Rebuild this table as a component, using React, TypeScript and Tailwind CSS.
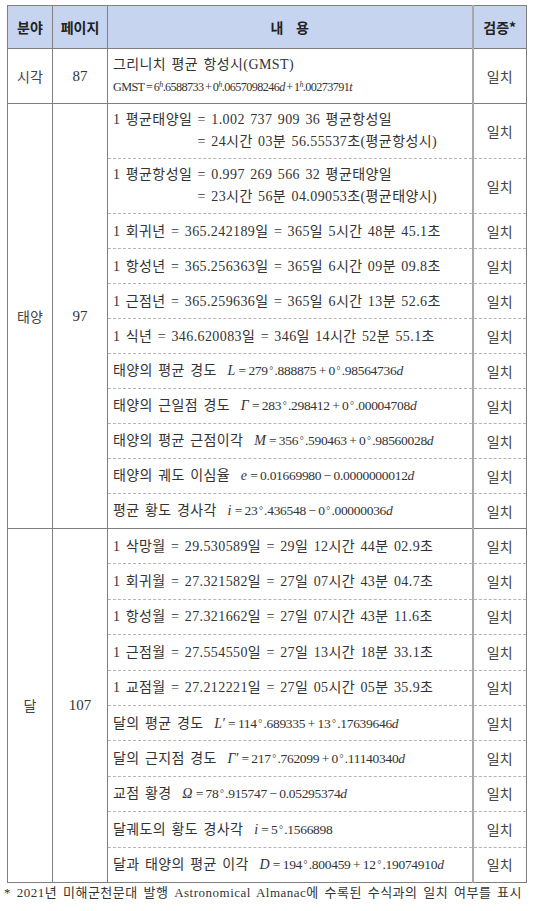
import React from 'react';

const kr = "font-['Liberation_Serif','Noto_Sans_CJK_KR',serif]";
const sans = "font-['Noto_Sans_CJK_KR',sans-serif]";
const math = "font-['Liberation_Serif',serif] text-[13.5px] tracking-[-0.3px] [word-spacing:0px]";

const solid = 'border-[#7f7f7f]';
const dash = '[border-top-style:dashed] border-t-[#b5b5b5]';

// 수식: 변수 + 값
function V({ children }: { children: React.ReactNode }) {
  return <i className="mr-[1px] text-[14px]">{children}</i>;
}
function Op({ children }: { children: React.ReactNode }) {
  return <span className="mx-[2.5px]">{children}</span>;
}
function Deg() {
  return <span className="mx-[1.5px] text-[10px] relative -top-[1px]">°</span>;
}

type Row = { content: React.ReactNode; double?: boolean };

function TwoLine({ a, b, c }: { a: string; b: string; c: string }) {
  return (
    <div className="grid grid-cols-[auto_1fr] leading-[22px]">
      <span>{a}&nbsp;</span>
      <span>{b}</span>
      <span />
      <span>{c}</span>
    </div>
  );
}

function Formula({ label, children }: { label: string; children: React.ReactNode }) {
  return (
    <span className="flex items-baseline">
      <span>{label}&nbsp;&nbsp;</span>
      <span className={math}>{children}</span>
    </span>
  );
}

const sunRows: Row[] = [
  { double: true, content: <TwoLine a="1 평균태양일" b="= 1.002 737 909 36 평균항성일" c="= 24시간 03분 56.55537초(평균항성시)" /> },
  { double: true, content: <TwoLine a="1 평균항성일" b="= 0.997 269 566 32 평균태양일" c="= 23시간 56분 04.09053초(평균태양시)" /> },
  { content: '1 회귀년 = 365.242189일 = 365일 5시간 48분 45.1초' },
  { content: '1 항성년 = 365.256363일 = 365일 6시간 09분 09.8초' },
  { content: '1 근점년 = 365.259636일 = 365일 6시간 13분 52.6초' },
  { content: '1 식년 = 346.620083일 = 346일 14시간 52분 55.1초' },
  {
    content: (
      <Formula label="태양의 평균 경도">
        <V>L</V><Op>=</Op>279<Deg />.888875<Op>+</Op>0<Deg />.98564736<i>d</i>
      </Formula>
    ),
  },
  {
    content: (
      <Formula label="태양의 근일점 경도">
        <V>Γ</V><Op>=</Op>283<Deg />.298412<Op>+</Op>0<Deg />.00004708<i>d</i>
      </Formula>
    ),
  },
  {
    content: (
      <Formula label="태양의 평균 근점이각">
        <V>M</V><Op>=</Op>356<Deg />.590463<Op>+</Op>0<Deg />.98560028<i>d</i>
      </Formula>
    ),
  },
  {
    content: (
      <Formula label="태양의 궤도 이심율">
        <V>e</V><Op>=</Op>0.01669980<Op>−</Op>0.0000000012<i>d</i>
      </Formula>
    ),
  },
  {
    content: (
      <Formula label="평균 황도 경사각">
        <V>i</V><Op>=</Op>23<Deg />.436548<Op>−</Op>0<Deg />.00000036<i>d</i>
      </Formula>
    ),
  },
];

const moonRows: Row[] = [
  { content: '1 삭망월 = 29.530589일 = 29일 12시간 44분 02.9초' },
  { content: '1 회귀월 = 27.321582일 = 27일 07시간 43분 04.7초' },
  { content: '1 항성월 = 27.321662일 = 27일 07시간 43분 11.6초' },
  { content: '1 근점월 = 27.554550일 = 27일 13시간 18분 33.1초' },
  { content: '1 교점월 = 27.212221일 = 27일 05시간 05분 35.9초' },
  {
    content: (
      <Formula label="달의 평균 경도">
        <V>L′</V><Op>=</Op>114<Deg />.689335<Op>+</Op>13<Deg />.17639646<i>d</i>
      </Formula>
    ),
  },
  {
    content: (
      <Formula label="달의 근지점 경도">
        <V>Γ′</V><Op>=</Op>217<Deg />.762099<Op>+</Op>0<Deg />.11140340<i>d</i>
      </Formula>
    ),
  },
  {
    content: (
      <Formula label="교점 황경">
        <V>Ω</V><Op>=</Op>78<Deg />.915747<Op>−</Op>0.05295374<i>d</i>
      </Formula>
    ),
  },
  {
    content: (
      <Formula label="달궤도의 황도 경사각">
        <V>i</V><Op>=</Op>5<Deg />.1566898
      </Formula>
    ),
  },
  {
    content: (
      <Formula label="달과 태양의 평균 이각">
        <V>D</V><Op>=</Op>194<Deg />.800459<Op>+</Op>12<Deg />.19074910<i>d</i>
      </Formula>
    ),
  },
];

function Group({ field, page, rows, height, last }: { field: string; page: string; rows: Row[]; height: string; last?: boolean }) {
  return (
    <>
      {rows.map((r, i) => (
        <tr key={i} className={r.double ? 'h-[55px]' : height}>
          {i === 0 && (
            <>
              <td rowSpan={rows.length} className={`border ${solid} text-center text-[#444] ${sans} text-[14px]`}>
                {field}
              </td>
              <td rowSpan={rows.length} className={`border ${solid} text-center text-[#333] font-['Liberation_Serif',serif] text-[15px]`}>
                {page}
              </td>
            </>
          )}
          <td
            className={`border-t border-l ${i === 0 ? solid : `${solid} ${dash}`} ${
              last && i === rows.length - 1 ? `border-b ${solid}` : ''
            } pl-[5px] text-[14px] text-[#333] whitespace-nowrap tracking-[0.4px] [word-spacing:1.5px]`}
          >
            {r.content}
          </td>
          <td
            className={`border-t border-l-2 border-r ${i === 0 ? solid : `${solid} ${dash}`} border-l-[#a8a8a8] ${
              last && i === rows.length - 1 ? `border-b ${solid}` : ''
            } text-center text-[14px] text-[#444] ${sans}`}
          >
            일치
          </td>
        </tr>
      ))}
    </>
  );
}

export default function App() {
  return (
    <div className={`min-h-[911px] bg-white pt-[5px] ${kr}`}>
      <table className="ml-[7px] w-[519px] table-fixed border-collapse">
        <colgroup>
          <col className="w-[45px]" />
          <col className="w-[55px]" />
          <col className="w-[365px]" />
          <col className="w-[54px]" />
        </colgroup>
        <thead>
          <tr className="h-[43px] bg-[#c6d4ef]">
            <th className={`border ${solid} ${sans} text-[14px] font-bold text-[#222]`}>분야</th>
            <th className={`border ${solid} ${sans} text-[14px] font-bold text-[#222]`}>페이지</th>
            <th className={`border ${solid} ${sans} text-[14px] font-bold text-[#222] whitespace-pre`}>내    용</th>
            <th className={`border border-l-2 border-l-[#a8a8a8] ${solid} ${sans} text-[14px] font-bold text-[#222]`}>검증*</th>
          </tr>
        </thead>
        <tbody>
          <tr className="h-[55px]">
            <td className={`border ${solid} text-center text-[#444] ${sans} text-[14px]`}>시각</td>
            <td className={`border ${solid} text-center text-[#333] font-['Liberation_Serif',serif] text-[15px]`}>87</td>
            <td className={`border ${solid} pl-[5px] text-[14px] text-[#333] leading-[22px] tracking-[0.4px] [word-spacing:1.5px]`}>
              <div>그리니치 평균 항성시(GMST)</div>
              <div className="font-['Liberation_Serif',serif] text-[12.2px] tracking-[-0.6px] [word-spacing:0px]">
                GMST<span className="mx-[1.5px]">=</span>6<sup className="text-[8px] italic">h</sup>.6588733
                <span className="mx-[1.5px]">+</span>0<sup className="text-[8px] italic">h</sup>.0657098246<i>d</i>
                <span className="mx-[1.5px]">+</span>1<sup className="text-[8px] italic">h</sup>.00273791<i>t</i>
              </div>
            </td>
            <td className={`border border-l-2 border-l-[#a8a8a8] ${solid} text-center text-[14px] text-[#444] ${sans}`}>일치</td>
          </tr>
          <Group field="태양" page="97" rows={sunRows} height="h-[35px]" />
          <Group field="달" page="107" rows={moonRows} height="h-[35.4px]" last />
        </tbody>
      </table>
      <p className="mt-[2px] pl-[4px] text-[13px] leading-[16px] text-[#333] whitespace-nowrap tracking-[0.5px] [word-spacing:2px]">
        * 2021년 미해군천문대 발행 Astronomical Almanac에 수록된 수식과의 일치 여부를 표시
      </p>
    </div>
  );
}
